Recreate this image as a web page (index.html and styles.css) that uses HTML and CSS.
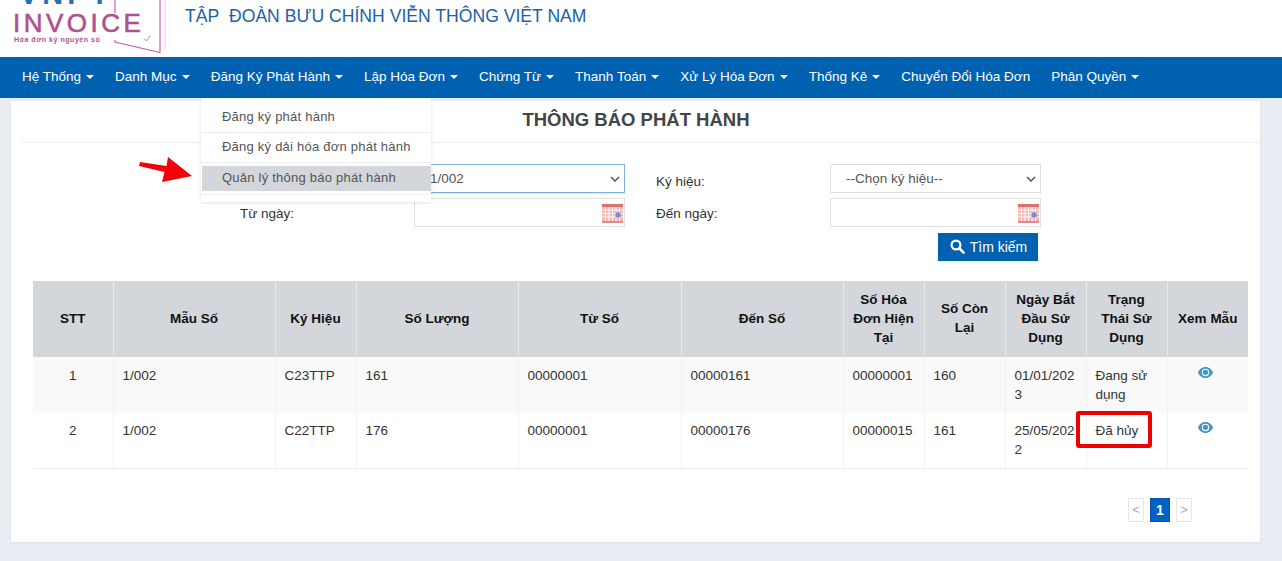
FILE: index.html
```html
<!DOCTYPE html>
<html lang="vi">
<head>
<meta charset="utf-8">
<title>Thông báo phát hành</title>
<link rel="stylesheet" href="styles.css">
</head>
<body>
<header class="top">
  <div class="logo">
    <div class="logo-vnpt">VNPT</div>
    <div class="logo-inv">INVOICE</div>
    <div class="logo-sub">Hóa đơn ký nguyên số</div>
    <svg class="logo-book" width="60" height="57" viewBox="0 0 60 57" fill="none">
      <path d="M7 0V13M7 40V42L52 52.500V0" stroke="#c9669f" stroke-width="1.200"/>
      <path d="M57 0V50" stroke="#ecc9de" stroke-width="1"/>
      <path d="M36 38.500l2.500 2.500 4-5.500" stroke="#7f9fc4" stroke-width="1"/>
    </svg>
  </div>
  <div class="org">TẬP&nbsp; ĐOÀN BƯU CHÍNH VIỄN THÔNG VIỆT NAM</div>
</header>
<nav class="nav">
  <a class="nav-item">Hệ Thống<i class="caret"></i></a>
  <a class="nav-item">Danh Mục<i class="caret"></i></a>
  <a class="nav-item">Đăng Ký Phát Hành<i class="caret"></i></a>
  <a class="nav-item">Lập Hóa Đơn<i class="caret"></i></a>
  <a class="nav-item">Chứng Từ<i class="caret"></i></a>
  <a class="nav-item">Thanh Toán<i class="caret"></i></a>
  <a class="nav-item">Xử Lý Hóa Đơn<i class="caret"></i></a>
  <a class="nav-item">Thống Kê<i class="caret"></i></a>
  <a class="nav-item">Chuyển Đổi Hóa Đơn</a>
  <a class="nav-item">Phân Quyền<i class="caret"></i></a>
</nav>
<ul class="menu">
  <li class="menu-item first">Đăng ký phát hành</li>
  <li class="menu-item second">Đăng ký dải hóa đơn phát hành</li>
  <li class="menu-item active">Quản lý thông báo phát hành</li>
</ul>
<svg class="arrow" width="56" height="30" viewBox="0 0 56 30">
  <path d="M1 5L27.500 9L29 0L53 19L23 25L25.500 15L0 9Z" fill="#f5000a"/>
</svg>
<main class="card">
  <h1 class="title">THÔNG BÁO PHÁT HÀNH</h1>
  <form class="filters">
    <span class="lbl"></span>
    <select class="ctl sel focus"><option>1/002</option></select>
    <label class="lbl lbl2 lbl-top">Ký hiệu:</label>
    <select class="ctl sel"><option>--Chọn ký hiệu--</option></select>
    <label class="lbl">Từ ngày:</label>
    <div class="ctl date"><svg width="21" height="20" viewBox="0 0 21 20"><use href="#cal"/></svg></div>
    <label class="lbl lbl2">Đến ngày:</label>
    <div class="ctl date"><svg width="21" height="20" viewBox="0 0 21 20"><use href="#cal"/></svg></div>
    <div class="actions">
      <button type="button" class="btn">
        <svg width="15" height="15" viewBox="0 0 15 15" fill="none"><circle cx="6" cy="6" r="4.400" stroke="#fff" stroke-width="2.200"/><path d="M9.500 9.500L13.600 13.600" stroke="#fff" stroke-width="2.600" stroke-linecap="round"/></svg>
        Tìm kiếm
      </button>
    </div>
  </form>
  <table class="grid">
    <colgroup>
      <col class="c0"><col class="c2"><col class="c1"><col class="c2"><col class="c3"><col class="c2"><col class="c1"><col class="c1"><col class="c1"><col class="c1"><col class="c1">
    </colgroup>
    <thead>
      <tr>
        <th>STT</th><th>Mẫu Số</th><th>Ký Hiệu</th><th>Số Lượng</th><th>Từ Số</th><th>Đến Số</th><th>Số Hóa Đơn Hiện Tại</th><th>Số Còn Lại</th><th>Ngày Bắt Đầu Sử Dụng</th><th>Trạng Thái Sử Dụng</th><th>Xem Mẫu</th>
      </tr>
    </thead>
    <tbody>
      <tr class="odd">
        <td class="ctr">1</td><td>1/002</td><td>C23TTP</td><td>161</td><td>00000001</td><td>00000161</td><td>00000001</td><td>160</td><td>01/01/2023</td><td>Đang sử dụng</td>
        <td class="ctr"><svg class="eye" width="15" height="11" viewBox="0 0 15 11"><use href="#eye"/></svg></td>
      </tr>
      <tr>
        <td class="ctr">2</td><td>1/002</td><td>C22TTP</td><td>176</td><td>00000001</td><td>00000176</td><td>00000015</td><td>161</td><td>25/05/2022</td><td class="mark-cell">Đã hủy<span class="mark"></span></td>
        <td class="ctr"><svg class="eye" width="15" height="11" viewBox="0 0 15 11"><use href="#eye"/></svg></td>
      </tr>
    </tbody>
  </table>
  <div class="pager">
    <span class="pg">&lt;</span><span class="pg on">1</span><span class="pg">&gt;</span>
  </div>
</main>
<svg class="defs" width="0" height="0">
  <symbol id="cal" viewBox="0 0 21 20">
    <rect x="0" y="1" width="21" height="19" fill="#f5b5b2"/>
    <rect x="0" y="1" width="21" height="3" fill="#d9716f"/>
    <rect x="0" y="18" width="21" height="2" fill="#e58a88"/>
    <path d="M0 7H21M0 10.500H21M0 14H21M3.500 4V18M7 4V18M10.500 4V18M14 4V18M17.500 4V18" stroke="#fff" stroke-width="1"/>
    <rect x="13.500" y="9.500" width="5" height="5" fill="#6c8fdc"/>
  </symbol>
  <symbol id="eye" viewBox="0 0 15 11">
    <path fill-rule="evenodd" d="M7.500 0C11 0 13.800 2.400 15 5.500C13.800 8.600 11 11 7.500 11C4 11 1.200 8.600 0 5.500C1.200 2.400 4 0 7.500 0ZM7.500 1.800A3.700 3.700 0 1 0 7.500 9.200A3.700 3.700 0 1 0 7.500 1.800Z" fill="#4596c8"/>
    <circle cx="7.500" cy="5.300" r="2.600" fill="#4596c8"/>
  </symbol>
</svg>
</body>
</html>
```
FILE: styles.css
```css
* { box-sizing: border-box; }
html, body { margin: 0; height: 561px; overflow: hidden; }
body {
  position: relative;
  background: #e9edf3;
  font-family: "Liberation Sans", Arial, sans-serif;
  font-size: 13.500px;
  color: #333;
}
.top {
  height: 57px;
  background: #fff;
  display: flex;
  overflow: hidden;
}
.logo {
  position: relative;
  width: 185px;
  flex: none;
}
.logo-vnpt {
  position: absolute;
  left: 19px;
  top: -22px;
  font-size: 29px;
  font-weight: 700;
  letter-spacing: 4px;
  color: #2a6fb0;
}
.logo-inv {
  position: absolute;
  left: 13px;
  top: 12px;
  font-size: 26px;
  line-height: 23px;
  letter-spacing: 3.500px;
  color: #b0508f;
  -webkit-text-stroke: 0.6px #b0508f;
}
.logo-sub {
  position: absolute;
  left: 14px;
  top: 35px;
  font-size: 7px;
  line-height: 9px;
  font-weight: 700;
  letter-spacing: .55px;
  color: #b0508f;
}
.logo-book {
  position: absolute;
  left: 108px;
  top: 0;
}
.org {
  padding-top: 6px;
  font-size: 17.600px;
  line-height: 21px;
  color: #1a62a8;
}
.nav {
  height: 41px;
  background: #0061b1;
  padding: 0 0 1px 11.500px;
  display: flex;
  align-items: center;
}
.nav-item {
  padding: 0 10.520px;
  color: #fff;
  white-space: nowrap;
  line-height: 40px;
}
.caret {
  display: inline-block;
  width: 0;
  height: 0;
  margin-left: 5px;
  vertical-align: middle;
  border-top: 4px solid #fff;
  border-left: 4px solid transparent;
  border-right: 4px solid transparent;
}
.menu {
  position: absolute;
  z-index: 3;
  left: 201px;
  top: 98px;
  width: 230px;
  height: 104px;
  margin: 0;
  padding: 4px 0 0;
  list-style: none;
  background: #fff;
  box-shadow: 0 1px 3px rgba(0, 0, 0, .12);
  color: #555;
  font-size: 13px;
  letter-spacing: .23px;
  white-space: nowrap;
}
.menu-item {
  padding: 0 21px;
  border-bottom: 1px solid #eee;
}
.first { height: 31px; line-height: 29px; }
.second { height: 30px; line-height: 27px; }
.menu-item.active {
  margin: 3px 0 0 1px;
  height: 25px;
  padding-left: 20px;
  line-height: 23px;
  background: #d3d7db;
  border: 0;
  box-shadow: 0 3px 0 #fff, 0 4px 0 #eee;
}
.arrow {
  position: absolute;
  z-index: 4;
  left: 139px;
  top: 157px;
}
.card {
  margin: 3px 22px 0 11px;
  height: 441px;
  background: #fff;
  box-shadow: 0 1px 2px rgba(0, 0, 0, .08);
  padding: 0 10px 0 22px;
}
.title {
  margin: 0 -10px 0 -11px;
  height: 42px;
  font-size: 18.500px;
  line-height: 38px;
  text-align: center;
  color: #444;
  border-bottom: 1px solid #eee;
  padding-right: 10px;
}
.filters {
  display: grid;
  grid-template-columns: 174px 211px 31px 174px 211px;
  grid-auto-rows: 29px;
  row-gap: 5px;
  margin: 21px 0 0 207px;
  width: 801px;
  align-items: center;
}
.lbl { padding-top: 2px; }
.lbl-top { padding-top: 5px; }
.lbl2 { grid-column: 4; }
.ctl {
  height: 29px;
  border: 1px solid #dfdfdf;
  background: #fff;
  font: inherit;
  color: #555;
}
.sel {
  appearance: none;
  padding-left: 15px;
  background: #fff url("data:image/svg+xml,%3Csvg xmlns='http://www.w3.org/2000/svg' width='10' height='6'%3E%3Cpath d='M1 1l4 4 4-4' fill='none' stroke='%23555' stroke-width='1.500'/%3E%3C/svg%3E") no-repeat right 4px center;
}
.focus {
  border-color: #7fb2d4;
  box-shadow: 0 1px 1px rgba(0, 97, 177, .15);
}
.date {
  display: flex;
  justify-content: flex-end;
  padding-right: 1px;
  align-items: center;
}
.actions {
  grid-column: 4 / 6;
  display: flex;
  justify-content: flex-end;
  padding-right: 3px;
  height: 28px;
}
.btn {
  width: 100px;
  height: 28px;
  border: 0;
  padding: 0 0 0 1px;
  background: #0061b1;
  color: #fff;
  font: inherit;
  font-size: 14px;
  display: flex;
  align-items: center;
  justify-content: center;
  gap: 5px;
}
.grid {
  width: 1215px;
  margin-top: 20px;
  table-layout: fixed;
  border-collapse: collapse;
}
.c0 { width: 80px; }
.c1 { width: 81px; }
.c2 { width: 162px; }
.c3 { width: 163px; }
.grid th {
  height: 76px;
  padding: 0 8px 2px;
  background: #d3d7db;
  color: #111;
  line-height: 19px;
  text-align: center;
  vertical-align: middle;
  border-left: 1px solid #e8e8e8;
}
.grid th:first-child { border-left: 0; }
.grid td {
  height: 55.500px;
  padding: 8px 9px;
  vertical-align: top;
  line-height: 19px;
  word-break: break-all;
  border-left: 1px solid #f2f2f2;
  border-bottom: 1px solid #eee;
}
.grid td:nth-child(10) { word-break: normal; }
.grid td:first-child { border-left: 0; }
.grid .odd td { background: #f9f9f9; border-bottom: 0; padding-top: 9px; }
.grid td.ctr { text-align: center; }
.eye { display: inline-block; vertical-align: top; margin: 1px 0 0 -5px; }
.mark-cell { position: relative; }
.mark {
  position: absolute;
  left: -11px;
  top: -2px;
  width: 76px;
  height: 37px;
  border: 4px solid #f00000;
  border-radius: 3px;
}
.pager {
  display: flex;
  justify-content: flex-end;
  gap: 6px;
  margin-top: 29px;
  padding-right: 58px;
}
.pg {
  width: 16px;
  height: 24px;
  border: 1px solid #e6e6e6;
  color: #aaa;
  font-size: 13px;
  line-height: 22px;
  text-align: center;
}
.pg.on {
  width: 20px;
  background: #0061c4;
  border-color: #0a4fa8;
  color: #fff;
  font-weight: 700;
  font-size: 14px;
}
.defs { position: absolute; }
```
